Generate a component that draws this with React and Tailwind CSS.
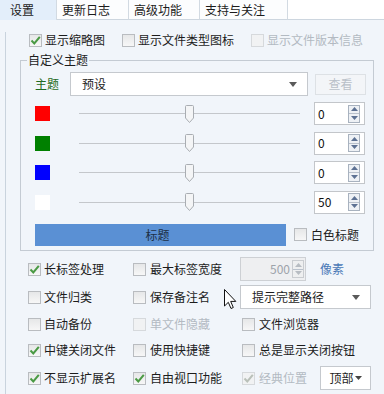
import React from "react";

const FONT = { fontFamily: '"Noto Sans CJK SC", "Microsoft YaHei", sans-serif' };

function Box({ checked, disabled }) {
  return (
    <span
      className={
        "relative flex h-[13px] w-[13px] shrink-0 items-center justify-center border " +
        (disabled
          ? "border-[#d6d9dc] bg-[#f1f2f3]"
          : "border-[#b9bcc0] bg-gradient-to-b from-[#e6e7e8] to-[#f7f7f7]")
      }
    >
      {checked && (
        <svg width="11" height="11" viewBox="0 0 11 11" className="absolute">
          <path
            d="M1.5 5.5 L4.3 8.5 L9.8 1.8"
            fill="none"
            stroke={disabled ? "#b9c0b9" : "#4a9a44"}
            strokeWidth="2"
          />
        </svg>
      )}
    </span>
  );
}

function Check({ label, checked, disabled, className = "" }) {
  return (
    <div className={"flex items-center gap-[3px] " + className}>
      <Box checked={checked} disabled={disabled} />
      <span className={disabled ? "text-[#b3bac2]" : "text-[#1c1c1c]"}>{label}</span>
    </div>
  );
}

function SpinArrows({ disabled }) {
  const c = disabled ? "#b7bcc2" : "#5d7193";
  return (
    <div
      className={
        "flex h-[18px] w-[12px] flex-col border " +
        (disabled ? "border-[#c9ccd0] bg-[#eeeff0]" : "border-[#a8b2bf] bg-[#eef1f5]")
      }
    >
      <div className="flex flex-1 items-center justify-center border-b border-[#b9c1cc]">
        <svg width="7" height="4" viewBox="0 0 7 4">
          <path d="M3.5 0 L7 4 L0 4 Z" fill={c} />
        </svg>
      </div>
      <div className="flex flex-1 items-center justify-center">
        <svg width="7" height="4" viewBox="0 0 7 4">
          <path d="M0 0 L7 0 L3.5 4 Z" fill={c} />
        </svg>
      </div>
    </div>
  );
}

function Spin({ value }) {
  return (
    <div className="flex h-[23px] w-[51px] items-center justify-between border border-[#c3c6ca] bg-white pl-[3px] pr-[4px]">
      <span className="text-[12px] text-[#111]">{value}</span>
      <SpinArrows />
    </div>
  );
}

function Slider() {
  return (
    <div className="relative flex h-[18px] w-[221px] items-center">
      <div className="h-px w-full bg-[#c4c7cb]" />
      <svg width="9" height="18" viewBox="0 0 9 18" className="absolute left-[106px] top-0">
        <path
          d="M1.5 0.5 H7.5 Q8.5 0.5 8.5 1.5 V13 L4.5 17.5 L0.5 13 V1.5 Q0.5 0.5 1.5 0.5 Z"
          fill="#f4f5f6"
          stroke="#a9adb2"
        />
      </svg>
    </div>
  );
}

function ColorRow({ color }) {
  return (
    <div className="flex h-[23px] items-center pl-[14px]">
      <div className="h-[15px] w-[15px] shrink-0" style={{ background: color }} />
      <div className="ml-[29px]">
        <Slider />
      </div>
      <div className="ml-[14px]">
        <Spin value={color === "#ffffff" ? "50" : "0"} />
      </div>
    </div>
  );
}

function Arrow() {
  return (
    <svg width="8" height="5" viewBox="0 0 8 5">
      <path d="M0 0 H8 L4 5 Z" fill="#5a5a5a" />
    </svg>
  );
}

function Cursor() {
  return (
    <svg
      width="13"
      height="21"
      viewBox="0 0 13 21"
      className="absolute left-[224px] top-[289px]"
    >
      <path
        d="M0.5 0.5 V17 L4.3 13.3 L7 19.5 L9.3 18.5 L6.7 12.4 H11.8 Z"
        fill="#ffffff"
        stroke="#111"
        strokeWidth="1"
        strokeLinejoin="round"
      />
    </svg>
  );
}

export default function App() {
  const tabs = [
    { t: "设置", w: 57 },
    { t: "更新日志", w: 72 },
    { t: "高级功能", w: 71 },
    { t: "支持与关注", w: 88 },
  ];
  return (
    <div
      className="relative h-[394px] w-[384px] overflow-hidden bg-[#f1f5fa] text-[12px] leading-[16px] text-[#1c1c1c]"
      style={FONT}
    >
      {/* tabs */}
      <div className="flex h-[20px] bg-white">
        {tabs.map((tab, i) => (
          <div
            key={tab.t}
            className={
              "flex h-full items-center border-r border-[#d2dae2] " +
              (i === 0
                ? "bg-[#e3eefa] pl-[10px]"
                : "border-b border-b-[#cdd6df] bg-[#fcfdfe] pl-[5px]")
            }
            style={{ width: tab.w }}
          >
            {tab.t}
          </div>
        ))}
        <div className="h-full flex-1 border-b border-[#cdd6df] bg-white" />
      </div>

      {/* panel */}
      <div className="ml-[5px] h-[374px] border-l border-[#c9d3dd] pl-[22px]">
        {/* row 1 */}
        <div className="flex h-[16px] items-center pt-0 mt-[12px] pl-[1px]">
          <Check label="显示缩略图" checked className="w-[93px]" />
          <Check label="显示文件类型图标" className="w-[129px]" />
          <Check label="显示文件版本信息" disabled />
        </div>

        {/* group */}
        <fieldset className="-ml-[8px] mt-[4px] h-[199px] w-[354px] border border-[#c4cbd3] px-0 pt-0">
          <legend className="ml-[6px] px-[1px] text-[#1c1c1c]">自定义主题</legend>
          <div className="mt-[4px] flex h-[24px] items-center pl-[14px]">
            <span className="w-[24px] text-[#1f6b22]">主题</span>
            <div className="ml-[11px] flex h-[24px] w-[238px] items-center justify-between border border-[#c5c9ce] bg-white pl-[11px] pr-[10px]">
              <span>预设</span>
              <Arrow />
            </div>
            <div className="ml-[7px] flex h-[21px] w-[51px] items-center justify-center border border-[#dde1e5] bg-[#f3f5f8] text-[#b9c0c8]">
              查看
            </div>
          </div>
          <div className="mt-[6px] flex flex-col gap-[6.5px]">
            <ColorRow color="#ff0000" />
            <ColorRow color="#008000" />
            <ColorRow color="#0000ff" />
            <ColorRow color="#ffffff" />
          </div>
          <div className="mt-[10px] flex h-[22px] items-center pl-[14px]">
            <div className="flex h-[22px] w-[251px] items-center justify-center bg-[#5a90d4] pr-[6px] text-[#1d2f45]">
              标题
            </div>
            <Check label="白色标题" className="ml-[8px] gap-[4px]" />
          </div>
        </fieldset>

        {/* lower rows */}
        <div className="mt-[6px] flex h-[24px] items-center">
          <Check label="长标签处理" checked className="w-[105px]" />
          <Check label="最大标签宽度" className="w-[107px] gap-[4px]" />
          <div className="flex h-[24px] w-[66px] items-center justify-end gap-[2px] border border-[#cdd0d4] bg-[#eeeff1] pr-[1px]">
            <span className="text-[#9da3aa]">500</span>
            <SpinArrows disabled />
          </div>
          <span className="ml-[14px] text-[#4a78b6]">像素</span>
        </div>
        <div className="mt-[4px] flex h-[24px] items-center">
          <Check label="文件归类" className="w-[105px]" />
          <Check label="保存备注名" className="w-[107px] gap-[4px]" />
          <div className="flex h-[24px] w-[131px] items-center justify-between border border-[#c5c9ce] bg-white pl-[11px] pr-[10px]">
            <span>提示完整路径</span>
            <Arrow />
          </div>
        </div>
        <div className="flex h-[30px] items-center">
          <Check label="自动备份" className="w-[105px]" />
          <Check label="单文件隐藏" disabled className="w-[109px] gap-[4px]" />
          <Check label="文件浏览器" className="gap-[4px]" />
        </div>
        <div className="flex h-[22px] items-center">
          <Check label="中键关闭文件" checked className="w-[105px]" />
          <Check label="使用快捷键" className="w-[109px] gap-[4px]" />
          <Check label="总是显示关闭按钮" className="gap-[4px]" />
        </div>
        <div className="mt-[5px] flex h-[24px] items-center">
          <Check label="不显示扩展名" checked className="w-[105px]" />
          <Check label="自由视口功能" checked className="w-[109px] gap-[4px]" />
          <Check label="经典位置" checked disabled className="w-[78px] gap-[4px]" />
          <div className="flex h-[24px] w-[51px] items-center justify-center border border-[#c5c9ce] bg-white">
            <span>顶部</span>
            <svg width="7" height="4" viewBox="0 0 7 4" className="ml-[1px]">
              <path d="M0 0 H7 L3.5 4 Z" fill="#444" />
            </svg>
          </div>
        </div>
      </div>

      <Cursor />
    </div>
  );
}
